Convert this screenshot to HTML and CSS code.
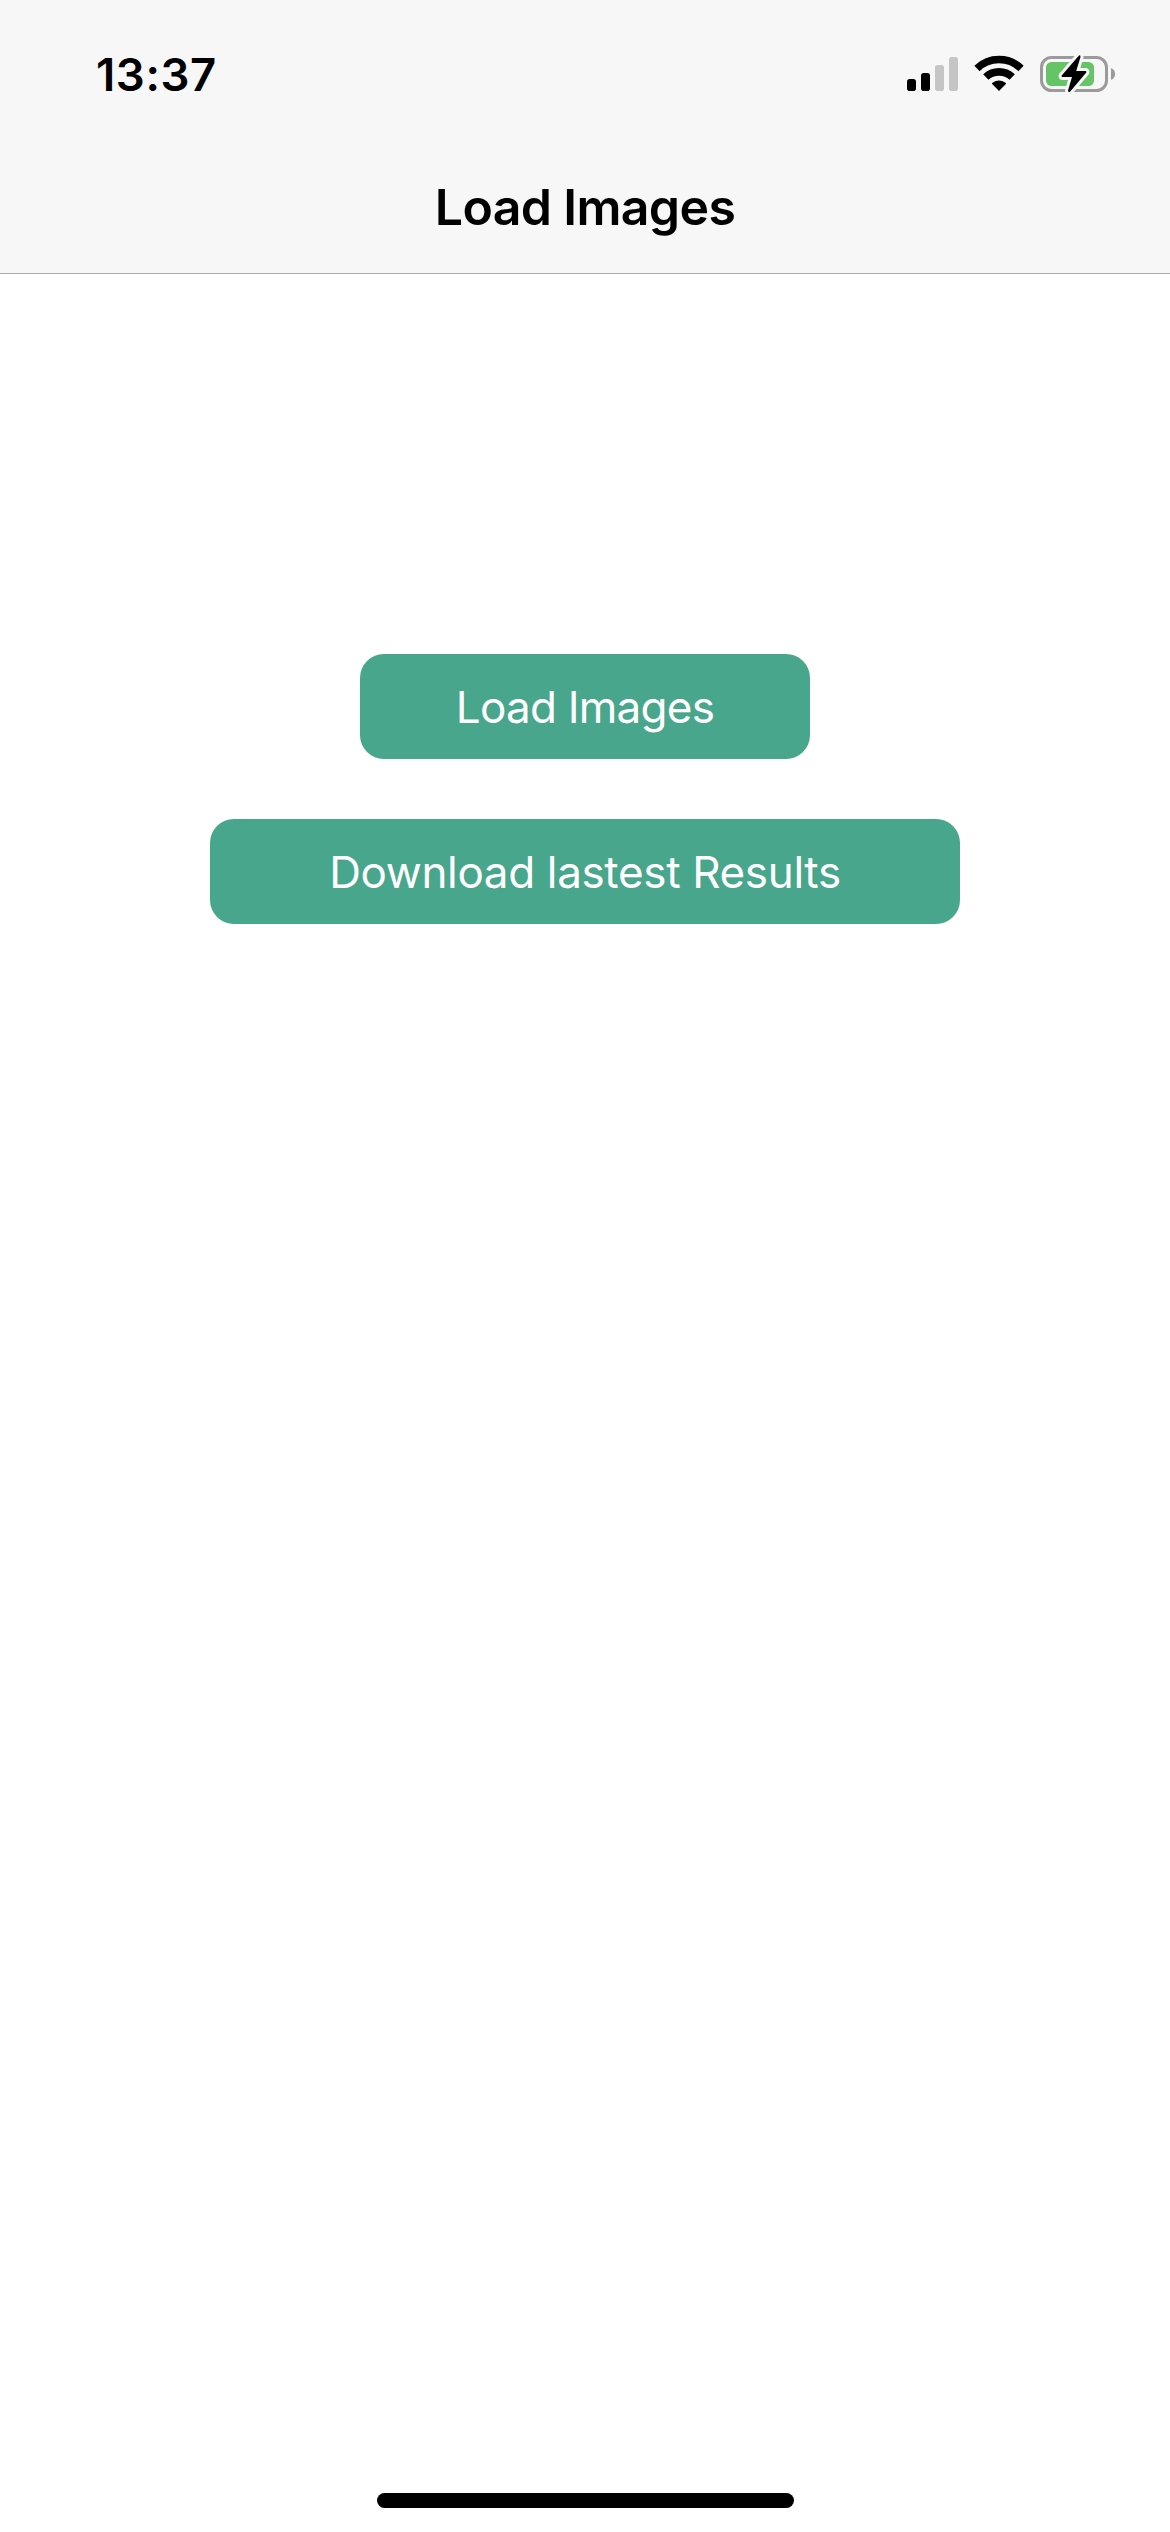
FILE: index.html
```html
<!DOCTYPE html>
<html lang="en">
<head>
<meta charset="utf-8">
<title>Load Images</title>
<link rel="stylesheet" href="styles.css">
</head>
<body>
<header class="header">
  <div class="status-bar">
    <span class="time">13:37</span>
    <svg class="status-icons" viewBox="0 0 240 70" aria-hidden="true">
      <rect x="17" y="39" width="9" height="12" rx="2.8"/>
      <rect x="31" y="33" width="9" height="18" rx="2.8"/>
      <rect class="dim" x="45" y="25" width="9" height="26" rx="2.8"/>
      <rect class="dim" x="59" y="17" width="9" height="34" rx="2.8"/>
      <path class="arc" d="M87 28.4A31.8 31.8 0 0 1 131 28.4"/>
      <path class="arc" d="M95.8 37.1A19.2 19.2 0 0 1 122.2 37.1"/>
      <path d="M109 51L102.1 44.1Q101.5 43.3 102.5 42.7Q109 38.2 115.5 42.7Q116.5 43.3 115.9 44.1Z"/>
      <rect class="case" x="151.5" y="17.5" width="65" height="33" rx="10"/>
      <path class="tip" d="M221 28Q225 29.7 225 34Q225 38.300 221 40Z"/>
      <rect class="charge" x="156" y="22" width="48" height="24" rx="5.5"/>
      <path class="bolt-gap" d="M189 15.500L171.700 35.500Q171 37 172.500 37H182L178 50.500Q178.500 53 180 51.700L196.300 32.500Q196.800 31 195.500 31H186.200L190.500 17Q190.500 14.500 189 15.500Z"/>
      <path d="M189 15.500L171.700 35.500Q171 37 172.500 37H182L178 50.500Q178.500 53 180 51.700L196.300 32.500Q196.800 31 195.500 31H186.200L190.500 17Q190.500 14.500 189 15.500Z"/>
    </svg>
  </div>
  <h1 class="title">Load Images</h1>
</header>
<main class="content">
  <button class="button load"><span>Load Images</span></button>
  <button class="button download"><span>Download lastest Results</span></button>
</main>
<footer class="footer"><div class="home-indicator"></div></footer>
</body>
</html>
```
FILE: styles.css
```css
* { box-sizing: border-box; }
body {
  margin: 0;
  height: 2532px;
  display: flex;
  flex-direction: column;
  background: #fff;
  font-family: Inter, "Liberation Sans", sans-serif;
  color: #000;
}
.header {
  height: 274px;
  background: #f7f7f7;
  border-bottom: 1px solid #acacac;
}
.status-bar {
  height: 141px;
  padding: 40px 40px 0 96px;
  display: flex;
  justify-content: space-between;
}
.time {
  font-size: 45.5px;
  font-weight: 600;
  line-height: 70px;
  letter-spacing: 0.6px;
}
.status-icons { width: 240px; height: 70px; }
.dim { fill: #c5c5c5; }
.arc { fill: none; stroke: #000; stroke-width: 7.6; }
.case { fill: none; stroke: #9b9b9b; stroke-width: 3; }
.tip { fill: #9b9b9b; }
.charge { fill: #65c466; }
.bolt-gap { stroke: #f7f7f7; stroke-width: 6; stroke-linejoin: round; }
.title {
  margin: 0;
  height: 132px;
  line-height: 132px;
  text-align: center;
  font-size: 50px;
  font-weight: 600;
  letter-spacing: -0.65px;
}
.content {
  flex: 1;
  padding-top: 380px;
  display: flex;
  flex-direction: column;
  align-items: center;
  gap: 60px;
}
.button {
  height: 105px;
  padding: 2px 0 0;
  border: 0;
  border-radius: 24px;
  background: #47a68b;
  color: #fff;
  font: 400 44px/103px Inter, "Liberation Sans", sans-serif;
}
.load { width: 450px; letter-spacing: -0.75px; }
.download { width: 750px; letter-spacing: -0.35px; }
.footer {
  height: 39px;
  display: flex;
  justify-content: center;
}
.home-indicator {
  width: 417px;
  height: 15px;
  border-radius: 8px;
  background: #000;
}
```
